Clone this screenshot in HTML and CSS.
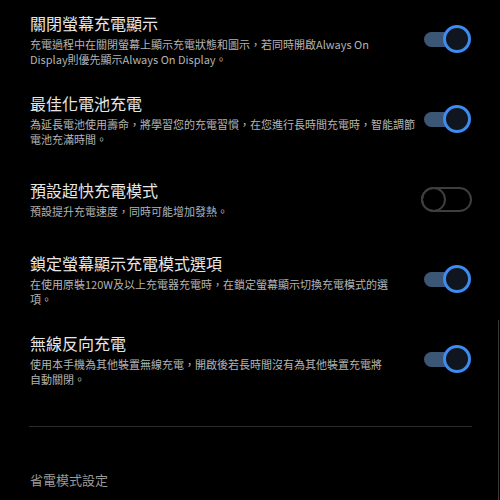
FILE: index.html
```html
<!DOCTYPE html>
<html lang="zh-Hant">
<head>
    <meta charset="UTF-8">
    <meta name="viewport" content="width=device-width, initial-scale=1.0">
    <title>充電設定</title>
    <link rel="stylesheet" href="styles.css">
</head>
<body>

<div class="settings">
    <!-- 關閉螢幕充電顯示 -->
    <div class="setting-row">
        <div class="setting-text">
            <div class="setting-title">關閉螢幕充電顯示</div>
            <div class="setting-desc">充電過程中在關閉螢幕上顯示充電狀態和圖示，若同時開啟Always On<br>Display則優先顯示Always On Display。</div>
        </div>
        <div class="toggle on"><span class="knob"></span></div>
    </div>

    <!-- 最佳化電池充電 -->
    <div class="setting-row">
        <div class="setting-text">
            <div class="setting-title">最佳化電池充電</div>
            <div class="setting-desc">為延長電池使用壽命，將學習您的充電習慣，在您進行長時間充電時，智能調節<br>電池充滿時間。</div>
        </div>
        <div class="toggle on"><span class="knob"></span></div>
    </div>

    <!-- 預設超快充電模式 -->
    <div class="setting-row">
        <div class="setting-text">
            <div class="setting-title">預設超快充電模式</div>
            <div class="setting-desc">預設提升充電速度，同時可能增加發熱。</div>
        </div>
        <div class="toggle off"><span class="knob"></span></div>
    </div>

    <!-- 鎖定螢幕顯示充電模式選項 -->
    <div class="setting-row">
        <div class="setting-text">
            <div class="setting-title">鎖定螢幕顯示充電模式選項</div>
            <div class="setting-desc">在使用原裝120W及以上充電器充電時，在鎖定螢幕顯示切換充電模式的選<br>項。</div>
        </div>
        <div class="toggle on"><span class="knob"></span></div>
    </div>

    <!-- 無線反向充電 -->
    <div class="setting-row">
        <div class="setting-text">
            <div class="setting-title">無線反向充電</div>
            <div class="setting-desc">使用本手機為其他裝置無線充電，開啟後若長時間沒有為其他裝置充電將<br>自動關閉。</div>
        </div>
        <div class="toggle on"><span class="knob"></span></div>
    </div>

    <hr class="divider">

    <div class="section-label">省電模式設定</div>
</div>

<div class="scrollbar"></div>

</body>
</html>
```

FILE: styles.css
```css
body {
    font-family: "Noto Sans CJK TC", "Noto Sans", sans-serif;
    background-color: #000;
    color: #e8e8e8;
    margin: 0;
    padding: 0;
    height: 500px;
    overflow: hidden;
}
.settings {
    padding: 11px 29px 0 30px;
}
.setting-row {
    display: flex;
    align-items: center;
    justify-content: space-between;
    min-height: 56px;
    margin-bottom: 24px;
}
.setting-text {
    flex: 1;
}
.setting-title {
    font-size: 16px;
    line-height: 22px;
    color: #e6e6e6;
}
.setting-desc {
    font-size: 11px;
    line-height: 15px;
    margin-top: 3px;
    color: #b4b4b4;
    white-space: nowrap;
}
.toggle {
    position: relative;
    width: 48px;
    height: 28px;
    flex-shrink: 0;
}
.toggle.on::before {
    content: "";
    position: absolute;
    left: 1px;
    top: 7px;
    width: 34px;
    height: 15px;
    border-radius: 8px;
    background-color: #3c5676;
}
.toggle.on .knob {
    position: absolute;
    right: 0;
    top: 0;
    width: 22px;
    height: 22px;
    border: 3px solid #3d8af0;
    border-radius: 50%;
    background-color: #10161f;
}
.toggle.off {
    width: 51px;
    height: 25px;
    margin-right: -1px;
    border: 2px solid #3e3e3e;
    border-radius: 13px;
    box-sizing: border-box;
}
.toggle.off .knob {
    position: absolute;
    left: -2px;
    top: -2px;
    width: 21px;
    height: 21px;
    border: 2px solid #3e3e3e;
    border-radius: 50%;
}
.divider {
    border: none;
    border-top: 1px solid #2c2c2c;
    margin: 39px -1px 0 -1px;
}
.section-label {
    margin-top: 44px;
    font-size: 13px;
    line-height: 18px;
    color: #999;
}
.scrollbar {
    position: absolute;
    right: 1px;
    top: 320px;
    width: 1px;
    height: 180px;
    background-color: #3a3a3a;
}
```
